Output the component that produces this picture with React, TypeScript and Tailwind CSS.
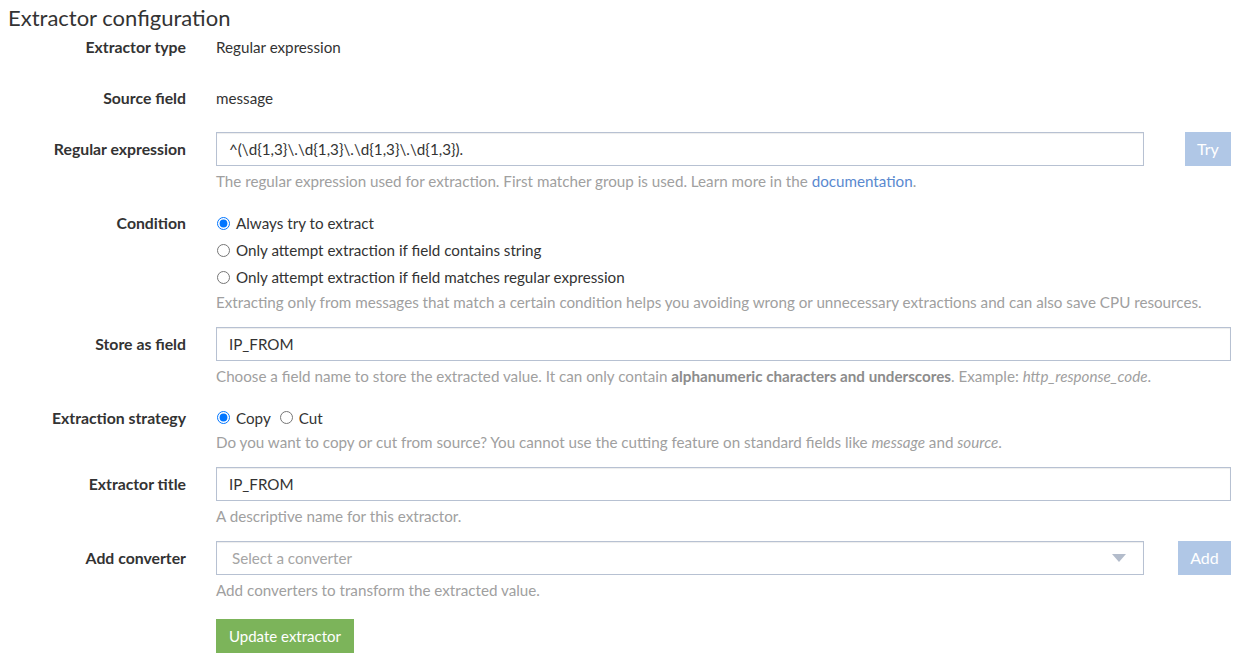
import React from 'react';

const LABEL = 'text-right font-bold text-[#333] leading-[20px] pt-[7px] text-[15.8px]';
const HELP = 'mt-[5px] leading-[20px] text-[#a0a0a0]';
const INPUT =
  'h-[34px] border border-[#b7c1d2] bg-white px-[12px] text-[#333] leading-[20px] shadow-[inset_0_1px_1px_rgba(0,0,0,0.075)] outline-none';

function Row({ label, children, className = '' }: { label: string; children: React.ReactNode; className?: string }) {
  return (
    <div className={`grid grid-cols-[186px_1fr] gap-x-[30px] mb-[15px] ${className}`}>
      <div className={LABEL}>{label}</div>
      <div>{children}</div>
    </div>
  );
}

function Radio({ checked, label }: { checked?: boolean; label: string }) {
  return (
    <label className="flex items-center h-[27px]">
      <input type="radio" defaultChecked={checked} name="r" className="m-0 ml-[1px] h-[13px] w-[13px]" />
      <span className="ml-[6px]">{label}</span>
    </label>
  );
}

export default function App() {
  return (
    <div className="bg-white min-h-screen pr-[26px] text-[15.2px] text-[#333] font-['Lato',sans-serif]">
      <h2 className="pl-[8px] pt-[5px] h-[30px] text-[22px] leading-[26px] text-[#333]">Extractor configuration</h2>

      <Row label="Extractor type" className="h-[36px]">
        <div className="pt-[7px] leading-[20px]">Regular expression</div>
      </Row>
      <Row label="Source field" className="h-[36px]">
        <div className="pt-[7px] leading-[20px]">message</div>
      </Row>

      <Row label="Regular expression">
        <div className="flex items-start">
          <input className={`${INPUT} w-[928px]`} defaultValue={'^(\\d{1,3}\\.\\d{1,3}\\.\\d{1,3}\\.\\d{1,3}).'} />
          <button className="ml-auto h-[34px] w-[46px] bg-[#b0c7e6] text-white text-[16px]">Try</button>
        </div>
        <div className={HELP}>
          The regular expression used for extraction. First matcher group is used. Learn more in the{' '}
          <span className="text-[#5a89cf]">documentation</span>.
        </div>
      </Row>

      <Row label="Condition">
        <div className="pt-[4px]">
          <Radio checked label="Always try to extract" />
          <Radio label="Only attempt extraction if field contains string" />
          <Radio label="Only attempt extraction if field matches regular expression" />
        </div>
        <div className="mt-[1px] leading-[20px] text-[#a0a0a0]">
          Extracting only from messages that match a certain condition helps you avoiding wrong or unnecessary extractions and can also save CPU resources.
        </div>
      </Row>

      <Row label="Store as field">
        <input className={`${INPUT} w-full`} defaultValue="IP_FROM" />
        <div className={HELP}>
          Choose a field name to store the extracted value. It can only contain{' '}
          <b className="font-bold text-[#8c8c8c]">alphanumeric characters and underscores</b>. Example:{' '}
          <i>http_response_code</i>.
        </div>
      </Row>

      <Row label="Extraction strategy">
        <div className="flex items-center h-[33px] pt-[1px]">
          <label className="flex items-center">
            <input type="radio" name="s" defaultChecked className="m-0 ml-[1px] h-[13px] w-[13px]" />
            <span className="ml-[6px]">Copy</span>
          </label>
          <label className="flex items-center ml-[9px]">
            <input type="radio" name="s" className="m-0 h-[13px] w-[13px]" />
            <span className="ml-[6px]">Cut</span>
          </label>
        </div>
        <div className="-mt-[2px] leading-[20px] text-[#a0a0a0]">
          Do you want to copy or cut from source? You cannot use the cutting feature on standard fields like{' '}
          <i>message</i> and <i>source</i>.
        </div>
      </Row>

      <Row label="Extractor title">
        <input className={`${INPUT} w-full`} defaultValue="IP_FROM" />
        <div className={HELP}>A descriptive name for this extractor.</div>
      </Row>

      <Row label="Add converter">
        <div className="flex items-start">
          <div className={`${INPUT} w-[928px] flex items-center justify-between pl-[15px] pr-[17px]`}>
            <span className="text-[#a5a5a5]">Select a converter</span>
            <svg width="14" height="8" viewBox="0 0 14 8">
              <path d="M0 0 L14 0 L7 8 Z" fill="#b3bccb" />
            </svg>
          </div>
          <button className="ml-auto h-[34px] w-[53px] bg-[#b0c7e6] text-white text-[16px]">Add</button>
        </div>
        <div className={HELP}>Add converters to transform the extracted value.</div>
      </Row>

      <div className="grid grid-cols-[186px_1fr] gap-x-[30px] pt-[4px]">
        <div />
        <div>
          <button className="h-[34px] px-[13px] bg-[#7cb45a] text-white text-[15px]">Update extractor</button>
        </div>
      </div>
    </div>
  );
}
